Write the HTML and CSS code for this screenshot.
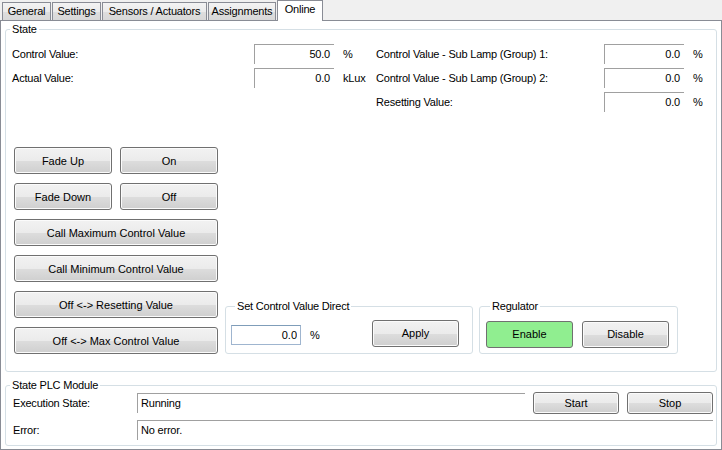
FILE: index.html
```html
<!DOCTYPE html>
<html lang="en">
<head>
    <meta charset="UTF-8">
    <title>Online</title>
    <link rel="stylesheet" href="styles.css">
</head>
<body>
    <div class="tabs">
        <div class="tab tab-general">General</div>
        <div class="tab tab-settings">Settings</div>
        <div class="tab tab-sensors">Sensors / Actuators</div>
        <div class="tab tab-assign">Assignments</div>
        <div class="tab tab-online active">Online</div>
    </div>
    <div class="panel">
        <fieldset class="group state">
            <legend>State</legend>
            <div class="values">
                <span class="label">Control Value:</span>
                <span class="field">50.0</span>
                <span class="unit">%</span>
                <span class="label">Control Value - Sub Lamp (Group) 1:</span>
                <span class="field">0.0</span>
                <span class="unit">%</span>

                <span class="label">Actual Value:</span>
                <span class="field">0.0</span>
                <span class="unit">kLux</span>
                <span class="label">Control Value - Sub Lamp (Group) 2:</span>
                <span class="field">0.0</span>
                <span class="unit">%</span>

                <span></span>
                <span></span>
                <span></span>
                <span class="label">Resetting Value:</span>
                <span class="field">0.0</span>
                <span class="unit">%</span>
            </div>
            <div class="lower">
                <div class="commands">
                    <button class="btn">Fade Up</button>
                    <button class="btn">On</button>
                    <button class="btn">Fade Down</button>
                    <button class="btn">Off</button>
                    <button class="btn wide">Call Maximum Control Value</button>
                    <button class="btn wide">Call Minimum Control Value</button>
                    <button class="btn wide">Off &lt;-&gt; Resetting Value</button>
                    <button class="btn wide">Off &lt;-&gt; Max Control Value</button>
                </div>
                <fieldset class="group direct">
                    <legend>Set Control Value Direct</legend>
                    <input class="entry" type="text" value="0.0">
                    <span class="entry-unit">%</span>
                    <button class="btn apply">Apply</button>
                </fieldset>
                <fieldset class="group regulator">
                    <legend>Regulator</legend>
                    <button class="btn enable">Enable</button>
                    <button class="btn">Disable</button>
                </fieldset>
            </div>
        </fieldset>
        <fieldset class="group plc">
            <legend>State PLC Module</legend>
            <div class="plc-grid">
                <span class="label">Execution State:</span>
                <span class="field left">Running</span>
                <button class="btn">Start</button>
                <button class="btn">Stop</button>
                <span class="label">Error:</span>
                <span class="field left span3">No error.</span>
            </div>
        </fieldset>
    </div>
</body>
</html>
```

FILE: styles.css
```css
* {
    box-sizing: border-box;
}

body {
    margin: 0;
    width: 722px;
    height: 450px;
    background-color: #f0f0f0;
    font-family: "Liberation Sans", Arial, sans-serif;
    font-size: 11px;
    letter-spacing: -0.2px;
    color: #000;
    overflow: hidden;
}

/* Tab strip */
.tabs {
    display: flex;
    align-items: flex-end;
    height: 20px;
    padding-left: 2px;
    gap: 1px;
    position: relative;
    z-index: 1;
}

.tab {
    height: 18px;
    line-height: 17px;
    text-align: center;
    border: 1px solid #898c95;
    border-bottom: none;
    background: linear-gradient(#f3f3f3, #ebebeb 50%, #dedede 51%, #d8d8d8);
}

.tab-general { width: 49px; }
.tab-settings { width: 49px; }
.tab-sensors { width: 105px; }
.tab-assign { width: 68px; }

.tab-online {
    width: 46px;
}

.tab.active {
    height: 21px;
    line-height: 16px;
    margin-bottom: -1px;
    background: #fff;
}

.panel {
    height: 430px;
    border: 1px solid #898c95;
    background-color: #fff;
    padding: 0 4px;
}

/* Group boxes */
.group {
    margin: 0;
    padding: 0;
    min-width: 0;
    border: 1px solid #d5dfe5;
    border-radius: 3px;
}

.group legend {
    margin-left: 4px;
    padding: 0 2px;
    line-height: 14px;
}

.state {
    margin-top: 1px;
    padding-bottom: 17px;
}

.values {
    display: grid;
    grid-template-columns: 242px 80px 42px 228px 80px 1fr;
    grid-auto-rows: 20px;
    row-gap: 4px;
    padding: 8px 0 0 6px;
    align-items: center;
}

.field {
    height: 20px;
    line-height: 19px;
    border-top: 1px solid #a0a0a0;
    border-left: 1px solid #a0a0a0;
    text-align: right;
    padding-right: 4px;
}

.field.left {
    text-align: left;
    padding-left: 3px;
}

.unit {
    padding-left: 9px;
}

.lower {
    display: flex;
    align-items: flex-end;
    margin-top: 35px;
    padding-left: 8px;
}

.commands {
    display: grid;
    grid-template-columns: 98px 98px;
    grid-auto-rows: 27px;
    column-gap: 8px;
    row-gap: 9px;
    width: 204px;
}

.btn {
    font: inherit;
    color: #000;
    padding: 0;
    border: 1px solid #707070;
    border-radius: 3px;
    background: linear-gradient(#f2f2f2, #ebebeb 50%, #dddddd 51%, #cfcfcf);
    box-shadow: inset 0 0 0 1px #fbfbfb;
}

.btn.wide {
    grid-column: span 2;
}

.direct,
.regulator {
    height: 55px;
    display: flex;
    align-items: center;
}

.direct {
    width: 248px;
    margin-left: 7px;
    padding: 0 13px 0 5px;
}

.entry {
    width: 70px;
    height: 20px;
    margin: 4px 0 0;
    padding: 0 3px;
    font: inherit;
    text-align: right;
    border: 1px solid #9fb5cf;
    border-top-color: #7f9db9;
    outline: none;
}

.entry-unit {
    margin: 4px 0 0 9px;
}

.apply {
    width: 87px;
    height: 27px;
    margin-left: auto;
}

.regulator {
    width: 199px;
    margin-left: 6px;
    padding-left: 6px;
    gap: 9px;
}

.regulator .btn {
    width: 87px;
    height: 27px;
    margin-top: 2px;
}

.btn.enable {
    background: #90ee90;
    box-shadow: none;
}

.plc {
    margin-top: 6px;
    padding-bottom: 5px;
}

.plc-grid {
    display: grid;
    grid-template-columns: 116px 388px 86px 86px;
    grid-template-rows: 22px 20px;
    column-gap: 8px;
    row-gap: 6px;
    align-items: center;
    padding-left: 7px;
}

.span3 {
    grid-column: span 3;
}

.plc-grid .btn {
    height: 22px;
}
```
